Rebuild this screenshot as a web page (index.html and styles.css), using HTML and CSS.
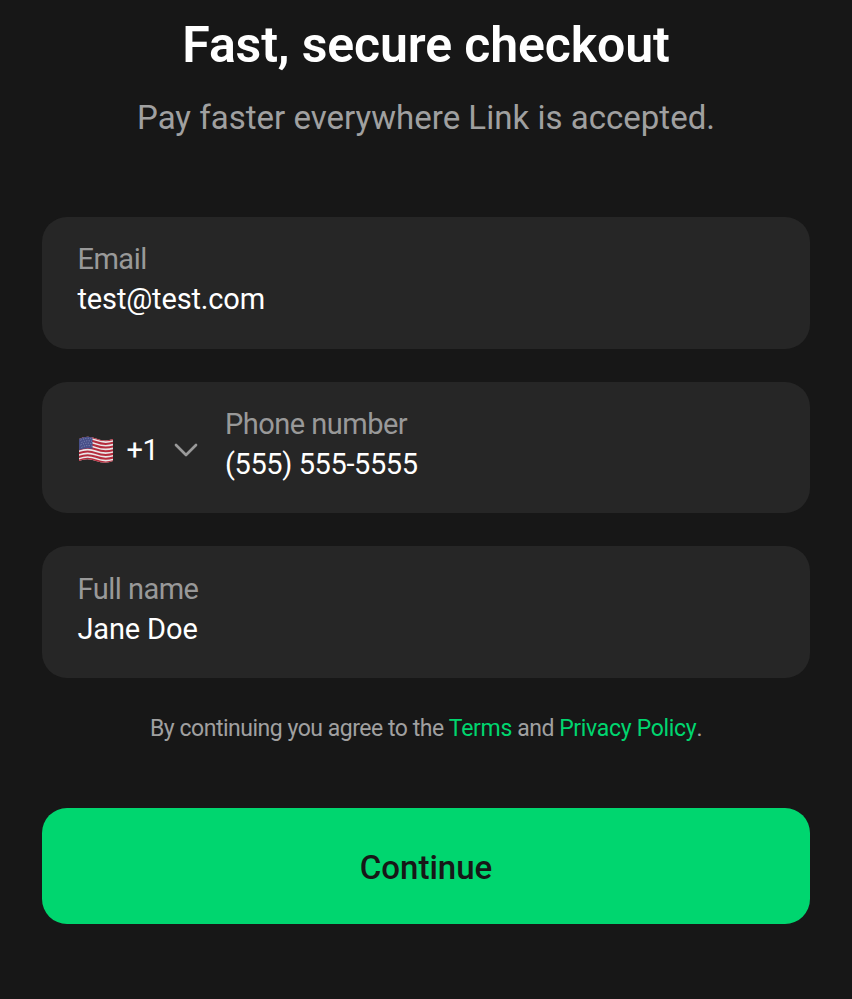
FILE: index.html
```html
<!DOCTYPE html>
<html lang="en">
<head>
<meta charset="utf-8">
<title>Fast, secure checkout</title>
<link rel="stylesheet" href="styles.css">
</head>
<body>
<main class="checkout">
  <h1 class="title">Fast, secure checkout</h1>
  <p class="subtitle">Pay faster everywhere Link is accepted.</p>
  <form class="fields">
    <div class="field">
      <div class="field-text"><span class="label">Email</span><span class="value">test@test.com</span></div>
    </div>
    <div class="field">
      <div class="country">
        <svg class="flag" viewBox="0 0 36 28" aria-hidden="true">
          <defs><clipPath id="wave"><path d="M1 3Q9-1 18 2.5T35 3V25Q27 28.5 18 25T1 25Z"/></clipPath></defs>
          <g clip-path="url(#wave)">
            <path fill="#e9e6e7" d="M0 0h36v28H0z"/>
            <path fill="none" stroke="#b52c3d" stroke-width="2" d="M0 2.8Q9-1.2 18 2.3T36 2.8M0 6.5Q9 2.5 18 6T36 6.5M0 10.2Q9 6.2 18 9.7T36 10.2M0 13.9Q9 9.9 18 13.4T36 13.9M0 17.6Q9 13.6 18 17.1T36 17.6M0 21.3Q9 17.3 18 20.8T36 21.3M0 25Q9 21 18 24.5T36 25"/>
            <path fill="#474f89" d="M0 3Q9-1 14.5 1.5V13Q9 11 0 14.5Z"/>
            <path fill="none" stroke="#8e96bd" stroke-width=".9" stroke-dasharray="1 1.5" d="M2.5 4.2Q9 1.2 14 3M3.5 6.6Q9 3.6 14 5.4M2.5 9Q9 6 14 7.8M3.5 11.4Q9 8.4 14 10.2"/>
          </g>
        </svg>
        <span class="code">+1</span>
        <svg class="chevron" viewBox="0 0 24 16" aria-hidden="true"><path d="M2 3L12 13L22 3"/></svg>
      </div>
      <div class="field-text"><span class="label">Phone number</span><span class="value phone">(555) 555-5555</span></div>
    </div>
    <div class="field">
      <div class="field-text"><span class="label">Full name</span><span class="value">Jane Doe</span></div>
    </div>
    <p class="legal">By continuing you agree to the <a>Terms</a> and <a>Privacy Policy</a>.</p>
    <button class="continue" type="button">Continue</button>
  </form>
</main>
</body>
</html>
```
FILE: styles.css
```css
* { box-sizing: border-box; }
body { margin: 0; background: #171717; color: #fff; font-family: Roboto, sans-serif; }
.checkout { height: 999px; padding: 14px 42px 0; overflow: hidden; }
.title { margin: 0; font-size: 50px; line-height: 62px; font-weight: 600; letter-spacing: -.13px; text-align: center; white-space: nowrap; }
.subtitle { margin: 22px 0 0; font-size: 33px; line-height: 40px; letter-spacing: .02px; color: #a0a0a0; text-align: center; white-space: nowrap; }
.fields { display: flex; flex-direction: column; margin-top: 79px; gap: 33px; }
.field { height: 131.6px; flex: none; background: #262626; border-radius: 25px; padding: 22.4px 36px 0 35.5px; display: flex; }
.field-text { display: flex; flex-direction: column; align-items: flex-start; }
.field:nth-child(n+2) .field-text { padding-top: .4px; }
.label, .value { font-size: 29px; line-height: 40px; white-space: nowrap; }
.label { color: #999; letter-spacing: -.52px; }
.value { letter-spacing: -.15px; }
.phone { letter-spacing: -.4px; }
.country { display: flex; align-items: center; height: 92.4px; width: 147.5px; }
.flag { width: 36px; height: 28px; }
.code { font-size: 29px; margin-left: 13px; width: 31px; letter-spacing: -.5px; }
.chevron { width: 24px; height: 16px; margin-left: 16.5px; fill: none; stroke: #999; stroke-width: 2.7; stroke-linecap: round; stroke-linejoin: round; }
.legal { margin: 1px 0 0; font-size: 23px; line-height: 34px; letter-spacing: -.48px; color: #a0a0a0; text-align: center; white-space: nowrap; }
.legal a { color: #00d66f; letter-spacing: -.31px; }
.continue { margin: 29px 0 0; height: 116px; border: 0; border-radius: 25px; background: #00d66f; color: #171717; font: 500 33px/40px Roboto, sans-serif; padding: 4px 0 0; }
```
